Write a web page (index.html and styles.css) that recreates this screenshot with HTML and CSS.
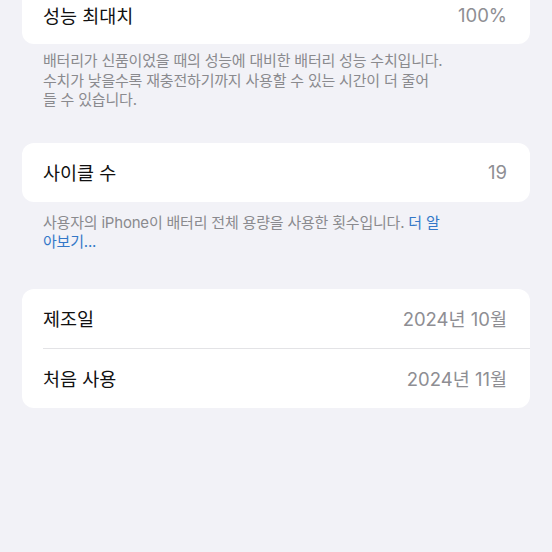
FILE: index.html
```html
<!DOCTYPE html>
<html lang="ko">
<head>
  <meta charset="UTF-8" />
  <meta name="viewport" content="width=device-width, initial-scale=1.0"/>
  <title>배터리 성능 상태</title>
  <link rel="stylesheet" href="styles.css">
</head>
<body>

  <div class="settings">
    <!-- 성능 최대치 -->
    <section class="group group-first">
      <div class="card">
        <div class="row">
          <span class="label">성능 최대치</span>
          <span class="value">100%</span>
        </div>
      </div>
      <p class="footnote">배터리가 신품이었을 때의 성능에 대비한 배터리 성능 수치입니다.<br>수치가 낮을수록 재충전하기까지 사용할 수 있는 시간이 더 줄어<br>들 수 있습니다.</p>
    </section>

    <!-- 사이클 수 -->
    <section class="group">
      <div class="card">
        <div class="row">
          <span class="label">사이클 수</span>
          <span class="value">19</span>
        </div>
      </div>
      <p class="footnote footnote-link">사용자의 iPhone이 배터리 전체 용량을 사용한 횟수입니다. <a href="#">더 알<br>아보기...</a></p>
    </section>

    <!-- 날짜 -->
    <section class="group group-last">
      <div class="card">
        <div class="row">
          <span class="label">제조일</span>
          <span class="value">2024년 10월</span>
        </div>
        <div class="row">
          <span class="label">처음 사용</span>
          <span class="value">2024년 11월</span>
        </div>
      </div>
    </section>
  </div>

</body>
</html>
```

FILE: styles.css
```css
/* Estilos gerais */
body {
  font-family: Inter, "Noto Sans CJK KR", sans-serif;
  background-color: #f2f2f7;
  margin: 0;
  padding: 0;
  height: 552px;
  overflow: hidden;
}

.settings {
  display: flex;
  flex-direction: column;
  gap: 33px;
}

.group-first {
  margin-top: -15px;
}

.group-last {
  margin-top: 4px;
}

/* Cartões */
.card {
  background: #fff;
  margin: 0 22px;
  border-radius: 12px;
  overflow: hidden;
}

.row {
  display: flex;
  align-items: center;
  justify-content: space-between;
  height: 59px;
  margin-left: 21px;
  padding-right: 23px;
}

.row + .row {
  border-top: 1px solid #e3e3e6;
}

.label {
  font-size: 18.5px;
  color: #111;
}

.value {
  font-size: 18.5px;
  color: #8e8e93;
}

/* Rodapés */
.footnote {
  margin: 0;
  padding: 7px 43px 0;
  font-size: 15px;
  line-height: 19.5px;
  color: #8a8a8e;
  letter-spacing: -0.2px;
}

.footnote-link {
  padding-top: 11px;
}

.footnote a {
  color: #3478c8;
  text-decoration: none;
}
```
